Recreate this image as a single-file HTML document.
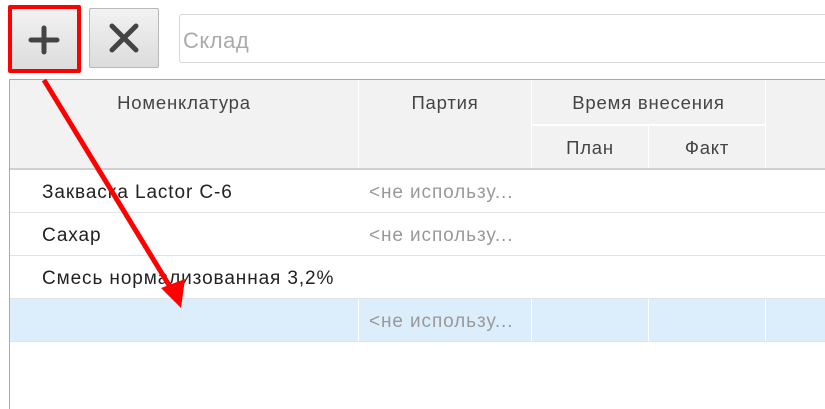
<!DOCTYPE html>
<html><head><meta charset="utf-8"><style>
body{margin:0;width:825px;height:400px;background:#fff;position:relative;overflow:hidden;font-family:"Liberation Sans","DejaVu Sans",sans-serif;}
.a{position:absolute;box-sizing:border-box;}
.btn{background:linear-gradient(#f2f2f2,#dcdcdc);border:1px solid #b8b8b8;border-radius:2px;}
.h{background:#f2f2f2;color:#444;font-size:18.5px;letter-spacing:0.8px;text-align:center;}
.t{font-size:19px;letter-spacing:0.9px;color:#222;}
.g{font-size:19px;letter-spacing:0.9px;color:#999;}
</style></head><body>
<div class="a btn" style="left:10px;top:8px;width:68px;height:63px;"></div>
<div class="a" style="left:8px;top:5px;width:73px;height:68px;border:4px solid #f00;border-radius:2px;"></div>
<svg class="a" style="left:27px;top:25px" width="34" height="30"><path d="M17 3V27M4 15H30" stroke="#444" stroke-width="5" stroke-linecap="round"/></svg>
<div class="a btn" style="left:89px;top:8px;width:70px;height:60px;"></div>
<svg class="a" style="left:107px;top:22px" width="34" height="32"><path d="M5 4L29 28M29 4L5 28" stroke="#444" stroke-width="5" stroke-linecap="round"/></svg>
<div class="a" style="left:179px;top:14px;width:660px;height:49px;border:1px solid #d8d8d8;border-radius:3px;"></div>
<div class="a" style="left:183px;top:28px;font-size:22px;letter-spacing:0.5px;color:#aaa;">Склад</div>

<div class="a" style="left:9px;top:79px;width:830px;height:330px;border-left:1px solid #aaa;border-top:1px solid #aaa;"></div>
<div class="a h" style="left:10px;top:80px;width:348px;height:89px;padding-top:12px;">Номенклатура</div>
<div class="a h" style="left:359px;top:80px;width:172px;height:89px;padding-top:12px;">Партия</div>
<div class="a h" style="left:532px;top:80px;width:233px;height:44px;padding-top:12px;">Время внесения</div>
<div class="a h" style="left:532px;top:126px;width:116px;height:43px;padding-top:11px;">План</div>
<div class="a h" style="left:649px;top:126px;width:116px;height:43px;padding-top:11px;">Факт</div>
<div class="a h" style="left:766px;top:80px;width:70px;height:89px;"></div>
<div class="a" style="left:10px;top:168px;width:830px;height:2px;background:#d0d0d0;"></div>

<div class="a" style="left:10px;top:212px;width:830px;height:1px;background:#e2e2e2;"></div>
<div class="a" style="left:10px;top:255px;width:830px;height:1px;background:#e2e2e2;"></div>
<div class="a" style="left:10px;top:298px;width:830px;height:1px;background:#e2e2e2;"></div>
<div class="a" style="left:10px;top:299px;width:830px;height:42px;background:#dcedfb;"></div>
<div class="a" style="left:358px;top:299px;width:1px;height:42px;background:#fff;"></div>
<div class="a" style="left:531px;top:299px;width:1px;height:42px;background:#fff;"></div>
<div class="a" style="left:648px;top:299px;width:1px;height:42px;background:#fff;"></div>
<div class="a" style="left:765px;top:299px;width:1px;height:42px;background:#fff;"></div>
<div class="a" style="left:10px;top:341px;width:830px;height:1px;background:#e2e2e2;"></div>

<div class="a t" style="left:42px;top:182px;">Закваска Lactor С-6</div>
<div class="a g" style="left:369px;top:182px;">&lt;не использу...</div>
<div class="a t" style="left:42px;top:225px;">Сахар</div>
<div class="a g" style="left:369px;top:225px;">&lt;не использу...</div>
<div class="a t" style="left:42px;top:268px;">Смесь нормализованная 3,2%</div>
<div class="a g" style="left:369px;top:311px;">&lt;не использу...</div>

<svg class="a" style="left:0;top:0" width="825" height="400"><path d="M44 80L172 290" stroke="#f00" stroke-width="5"/><path d="M181 308L161 288L185 279Z" fill="#f00"/></svg>
</body></html>
